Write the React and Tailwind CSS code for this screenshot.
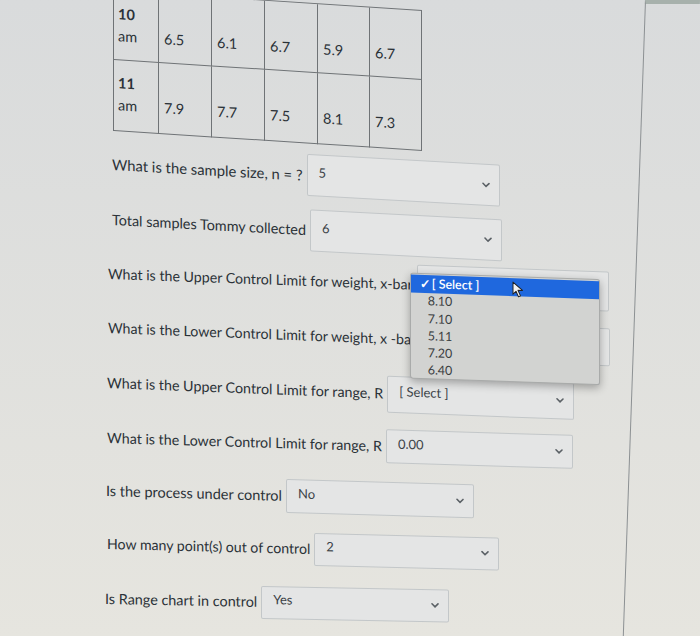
import React from 'react';

const tableRows = [
  { n: '10', vals: ['6.5', '6.1', '6.7', '5.9', '6.7'], h: 'h-[69px]' },
  { n: '11', vals: ['7.9', '7.7', '7.5', '8.1', '7.3'], h: 'h-[71px]' },
];

const questions = [
  { label: 'What is the sample size, n = ?', value: '5', row: 'mt-[11px] ml-[7px] skew-y-[3.2deg] text-[14.8px]', box: 'w-[193px] h-[42px]' },
  { label: 'Total samples Tommy collected', value: '6', row: 'mt-[12px] ml-[7px] skew-y-[3deg] text-[14.4px]', box: 'w-[192px] h-[42px]' },
  { label: 'What is the Upper Control Limit for weight, x-bar', value: '', row: 'mt-[10px] ml-[3px] skew-y-[2deg] relative z-10 text-[14.2px]', box: 'w-[192px] h-[40px]', open: true },
  { label: 'What is the Lower Control Limit for weight, x -bar', value: '', row: 'mt-[10px] ml-[3px] skew-y-[2.2deg] text-[14.2px]', box: 'w-[190px] h-[38px]' },
  { label: 'What is the Upper Control Limit for range, R', value: '[ Select ]', row: 'mt-[11px] ml-[2px] skew-y-[2.2deg] text-[14.3px]', box: 'w-[187px] h-[37px]' },
  { label: 'What is the Lower Control Limit for range, R', value: '0.00', row: 'mt-[11px] ml-[2px] skew-y-[1.7deg] text-[14.25px]', box: 'w-[187px] h-[34px]' },
  { label: 'Is the process under control', value: 'No', row: 'mt-[9px] ml-[1px] skew-y-[1.6deg] text-[14.5px]', box: 'w-[188px] h-[34px]' },
  { label: 'How many point(s) out of control', value: '2', row: 'mt-[9px] ml-[2px] skew-y-[1.4deg] text-[14.15px]', box: 'w-[185px] h-[33px]' },
  { label: 'Is Range chart in control', value: 'Yes', row: 'mt-[11px] ml-0 skew-y-[1.1deg] text-[14.4px]', box: 'w-[188px] h-[33px]' },
];

const options = ['8.10', '7.10', '5.11', '7.20', '6.40'];

function Chevron() {
  return (
    <svg width="8" height="6" viewBox="0 0 8 6" className="shrink-0">
      <path d="M1 1.5 L4 4.5 L7 1.5" fill="none" stroke="#5b6166" strokeWidth="1.6" strokeLinecap="round" />
    </svg>
  );
}

function Cursor() {
  return (
    <svg width="12" height="17" viewBox="0 0 12 17" className="absolute left-[101px] top-[3px]">
      <path d="M1 1 L1 13 L4 10 L6.5 15.5 L8.5 14.5 L6 9 L10.5 9 Z" fill="#f4f4f4" stroke="#222" strokeWidth="1" strokeLinejoin="round" />
    </svg>
  );
}

function Dropdown() {
  return (
    <div className="absolute left-[-8px] top-[7px] w-[190px] h-[106px] bg-[#d2d3d1] border border-[#a9abaa] rounded-[3px] shadow-[0_3px_8px_rgba(0,0,0,0.3)] pt-[1px]">
      <div className="relative h-[18px] bg-[#1f68de] flex items-center pl-[9px] text-white text-[12.5px] font-semibold">
        <span className="w-[9px]">✓</span>
        <span className="ml-[3px]">[ Select ]</span>
        <Cursor />
      </div>
      {options.map((o) => (
        <div key={o} className="h-[17.3px] flex items-center pl-[17px] text-[12.5px] text-[#3a3d3f]">
          {o}
        </div>
      ))}
    </div>
  );
}

export default function App() {
  return (
    <div className="w-full h-[636px] overflow-hidden flex bg-gradient-to-b from-[#d9dbdc] to-[#e6e5df] font-['Lato','Liberation_Sans',sans-serif] text-[#2b3238]">
      <div className="w-[645px] shrink-0">
        <div className="ml-[113px] mt-[-10px] w-fit origin-top-left skew-y-[3.7deg] border-l border-t border-[#6f7376] text-[14.5px]">
          {tableRows.map((r) => (
            <div key={r.n} className={`grid grid-cols-[45px_53px_53px_53px_52px_52px] ${r.h}`}>
              <div className="border-r border-b border-[#6f7376] pl-[4px] pt-[12px] leading-[22px]">
                <div className="font-bold">{r.n}</div>
                <div>am</div>
              </div>
              {r.vals.map((v, i) => (
                <div key={i} className="border-r border-b border-[#6f7376] pl-[5px] pt-[34px] leading-[22px]">
                  {v}
                </div>
              ))}
            </div>
          ))}
        </div>

        <div className="flex flex-col items-start pl-[105px]">
          {questions.map((q) => (
            <div key={q.label} className={`flex items-center gap-[4px] h-[44px] origin-left ${q.row}`}>
              <span className="whitespace-nowrap">{q.label}</span>
              <div className={`relative flex items-center justify-between pl-[11px] pr-[9px] border border-[#c3c7c9] rounded-[2px] bg-[#e4e5e5] ${q.box}`}>
                <span className="text-[13px] text-[#3b4247] pb-[4px]">{q.value}</span>
                <Chevron />
                {q.open && <Dropdown />}
              </div>
            </div>
          ))}
        </div>
      </div>
      <div className="flex-1 origin-top skew-x-[-2deg] border-l border-[#8c9093] border-t-[4px] border-t-[#a7b1ac]"></div>
    </div>
  );
}
